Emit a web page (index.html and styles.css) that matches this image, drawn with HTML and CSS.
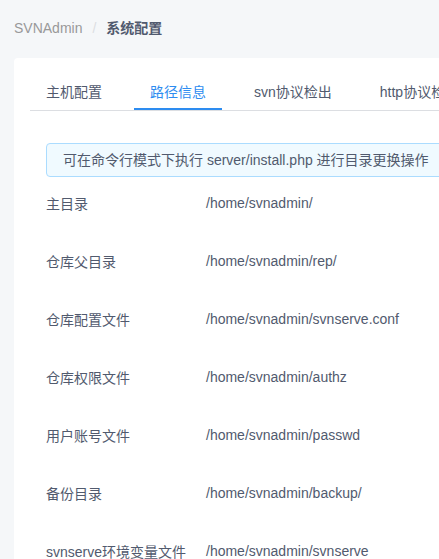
FILE: index.html
```html
<!DOCTYPE html>
<html lang="zh-CN">
<head>
<meta charset="utf-8">
<title>系统配置 - SVNAdmin</title>
<link rel="stylesheet" href="styles.css">
</head>
<body>
<div class="page">
  <div class="breadcrumb">
    <span class="crumb">SVNAdmin</span><span class="sep">/</span><span class="crumb current">系统配置</span>
  </div>
  <div class="card">
    <div class="tabs-nav">
      <div class="tab">主机配置</div>
      <div class="tab active">路径信息</div>
      <div class="tab">svn协议检出</div>
      <div class="tab">http协议检出</div>
    </div>
    <div class="pane">
      <div class="alert">可在命令行模式下执行 server/install.php 进行目录更换操作</div>
      <div class="form">
        <div class="form-item"><div class="label">主目录</div><div class="value">/home/svnadmin/</div></div>
        <div class="form-item"><div class="label">仓库父目录</div><div class="value">/home/svnadmin/rep/</div></div>
        <div class="form-item"><div class="label">仓库配置文件</div><div class="value">/home/svnadmin/svnserve.conf</div></div>
        <div class="form-item"><div class="label">仓库权限文件</div><div class="value">/home/svnadmin/authz</div></div>
        <div class="form-item"><div class="label">用户账号文件</div><div class="value">/home/svnadmin/passwd</div></div>
        <div class="form-item"><div class="label">备份目录</div><div class="value">/home/svnadmin/backup/</div></div>
        <div class="form-item"><div class="label">svnserve环境变量文件</div><div class="value">/home/svnadmin/svnserve</div></div>
      </div>
    </div>
  </div>
</div>
</body>
</html>
```
FILE: styles.css
```css
html, body {
  margin: 0;
  padding: 0;
  overflow: hidden;
  background: #f5f7f9;
}
body {
  font-family: "Liberation Sans", "Noto Sans CJK SC", sans-serif;
  font-size: 14px;
  color: #515a6e;
}
.page {
  width: 1000px;
  padding: 18px 14px;
}
.breadcrumb {
  line-height: 21px;
  height: 21px;
  margin-bottom: 19px;
}
.crumb {
  color: #999999;
}
.crumb.current {
  color: #515a6e;
  font-weight: bold;
}
.sep {
  color: #dcdee2;
  padding: 0 10px;
}
.card {
  background: #ffffff;
  border-radius: 4px;
  padding: 16px;
  min-height: 600px;
}
.tabs-nav {
  display: flex;
  border-bottom: 1px solid #dcdee2;
  height: 36px;
  margin-bottom: 16px;
}
.tab {
  padding: 8px 16px 6px;
  margin-right: 16px;
  line-height: 21px;
  border-bottom: 2px solid transparent;
  white-space: nowrap;
  color: #515a6e;
}
.tab.active {
  color: #2d8cf0;
  border-bottom-color: #2d8cf0;
}
.pane {
  padding: 16px;
}
.alert {
  background: #f0faff;
  border: 1px solid #abdcff;
  border-radius: 4px;
  padding: 8px 48px 8px 16px;
  line-height: 16px;
  margin-bottom: 10px;
  color: #515a6e;
}
.form-item {
  display: flex;
  margin-bottom: 24px;
}
.label {
  width: 148px;
  flex: none;
  padding: 10px 12px 10px 0;
  line-height: 14px;
  white-space: nowrap;
}
.value {
  line-height: 32px;
  white-space: nowrap;
}
```
